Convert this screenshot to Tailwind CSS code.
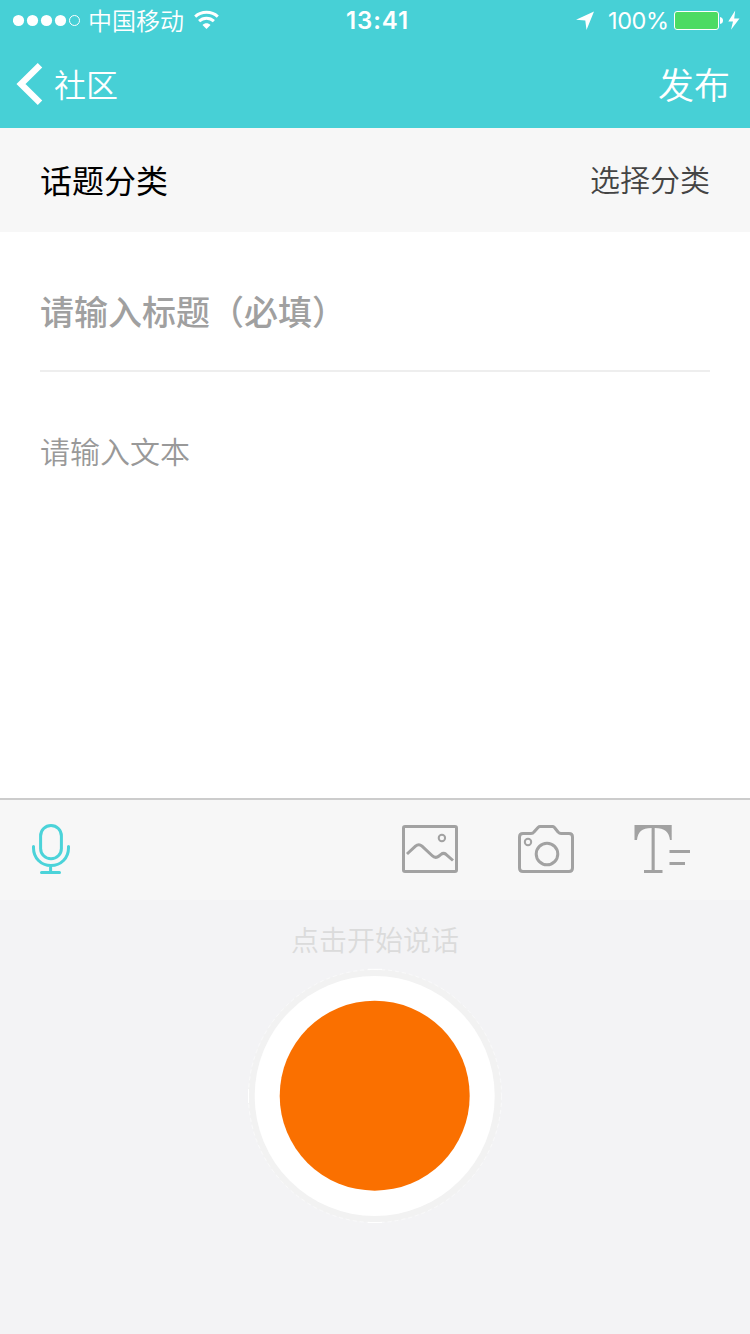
<!DOCTYPE html>
<html lang="zh-CN">
<head>
<meta charset="utf-8">
<title>发布话题</title>
<script src="https://cdn.jsdelivr.net/npm/@tailwindcss/browser@4"></script>
</head>
<body class="w-[750px] h-[1334px] overflow-hidden bg-white flex flex-col font-['Noto_Sans_CJK_SC',sans-serif]">
  <header class="h-32 shrink-0 bg-[#47d0d6] text-white">
    <div class="h-10 grid grid-cols-3 items-center">
      <div class="flex items-center h-10 pl-[13px]">
        <svg class="w-[68px] h-10" viewBox="0 0 68 40" fill="#fff">
          <circle cx="5.5" cy="20.5" r="5.6"/><circle cx="19.5" cy="20.5" r="5.6"/><circle cx="33.5" cy="20.5" r="5.6"/><circle cx="47.5" cy="20.5" r="5.6"/>
          <circle cx="61.5" cy="20.5" r="5" fill="none" stroke="#fff"/>
        </svg>
        <span class="ml-[7px] text-2xl leading-10 font-[350] whitespace-nowrap">中国移动</span>
        <svg class="ml-[10px] w-[25px] h-10 shrink-0" viewBox="0 0 25 40" fill="none" stroke="#fff" stroke-width="3">
          <path d="M1.2 16.6C7.5 10.9 17.5 10.9 23.8 16.6"/>
          <path d="M5.1 21.1C9.2 17.2 15.8 17.2 19.9 21.1"/>
          <path d="M8.5 25.1C10.7 22.7 14.3 22.7 16.5 25.1L12.5 29Z" fill="#fff" stroke="none"/>
        </svg>
      </div>
      <div class="text-center text-2xl leading-[38px] font-semibold tracking-[0.9px] font-[Inter,sans-serif] pl-[5px] pt-[2px]">13:41</div>
      <div class="flex items-center justify-end h-10 pr-[10px]">
        <svg class="w-[18px] h-10 shrink-0" viewBox="0 0 18 40" fill="#fff"><path d="M18 11.500L0 19.700L9.300 20.600L10.500 30Z"/></svg>
        <span class="ml-[14px] pt-[2px] w-[60px] text-[23.5px] leading-[38px] font-normal tracking-[-0.4px] whitespace-nowrap font-[Inter,sans-serif]">100%</span>
        <svg class="ml-[5px] w-[50px] h-10 shrink-0" viewBox="0 0 50 40">
          <rect x="1.500" y="11.500" width="44" height="18" rx="2.500" fill="#4cdb63" stroke="#fff"/>
          <path d="M47 17Q50 17.500 50 20.500Q50 23.500 47 24Z" fill="#fff"/>
        </svg>
        <svg class="ml-[5px] w-3 h-10 shrink-0" viewBox="0 0 12 40" fill="#fff"><path d="M7.200 10.500L0.300 21.500H5L3 29.700L11.500 18.400H6.200Z"/></svg>
      </div>
    </div>
    <div class="h-[88px] flex items-center justify-between pl-4 pr-5">
      <div class="flex items-center">
        <svg class="w-[27px] h-[44px]" viewBox="0 0 27 44" fill="none" stroke="#fff" stroke-width="6.400"><path d="M24 3.200L5 22L24 40.800"/></svg>
        <span class="ml-[11px] text-[32px] leading-[86px] pb-[2px] font-[350]">社区</span>
      </div>
      <span class="text-4xl leading-[86px] pb-[2px] font-[350]">发布</span>
    </div>
  </header>
  <section class="h-[104px] shrink-0 bg-[#f7f7f7] px-10 pb-[3px] flex items-center justify-between">
    <span class="text-[32px] text-black font-normal">话题分类</span>
    <span class="text-[30px] text-[#444] font-[350]">选择分类</span>
  </section>
  <main class="h-[566px] shrink-0 px-10">
    <div class="h-[140px] pt-[19px] border-b-2 border-[#eee] flex items-center text-[34px] font-medium text-[#a0a0a0] whitespace-nowrap">请输入标题（必填）</div>
    <div class="pt-[56px] text-[30px] leading-[44px] font-[350] text-[#999]">请输入文本</div>
  </main>
  <nav class="h-[102px] shrink-0 bg-[#f7f7f7] border-t-2 border-[#ccc] flex items-center justify-between pl-8 pr-[59px]">
    <svg class="w-[38px] h-[100px]" viewBox="32 800 38 100" fill="none" stroke="#4bd3d9" stroke-width="3" stroke-linecap="round">
      <rect x="40.600" y="825.500" width="20.800" height="33.300" rx="10.400"/>
      <path d="M33.500 846.500V848C33.500 858 41 865.600 51 865.600S68.500 858 68.500 848V846.500M50.600 866V872M41.500 872.500H59.500"/>
    </svg>
    <div class="flex items-center gap-[60px]">
      <svg class="w-14 h-[100px]" viewBox="402 800 56 100" fill="none" stroke="#a2a2a2" stroke-width="3">
        <rect x="403.500" y="826.500" width="53" height="45" rx="1.500"/>
        <circle cx="441.900" cy="838" r="3.200" stroke-width="2"/>
        <path d="M407 854L415.500 846.200Q418.800 843.200 422 846.200L432 855.500Q435.500 859 439 856L441 854.400Q443.500 852.400 446 854.300L453 860.500"/>
      </svg>
      <svg class="w-14 h-[100px]" viewBox="518 800 56 100" fill="none" stroke="#a2a2a2" stroke-width="3">
        <path d="M523 833.500H531Q533 833.500 534 832L538 827.500Q539 826.500 540 826.500H552.500Q553.500 826.500 554.500 827.500L558 832Q559.500 833.500 561 833.500H569Q572.500 833.500 572.500 837V868Q572.500 871.500 569 871.500H523Q519.500 871.500 519.500 868V837Q519.500 833.500 523 833.500Z"/>
        <circle cx="528" cy="842" r="3.200" stroke-width="2"/>
        <circle cx="547" cy="854" r="10.800"/>
      </svg>
      <svg class="w-[57px] h-[100px]" viewBox="634 800 57 100" fill="#a2a2a2">
        <path d="M634.500 825H671.700V840H670C669 832 665 828 654.700 828V870H662.500V873H644V870H651.600V828C641.500 828 638 832 637 840H634.500Z"/>
        <path d="M669.500 850H690V853H669.500ZM669.500 862H685V865H669.500Z"/>
      </svg>
    </div>
  </nav>
  <section class="flex-1 bg-[#f3f3f5] flex flex-col items-center">
    <p class="mt-[17px] text-[28px] leading-[44px] font-[350] text-[#dbdbdb]">点击开始说话</p>
    <svg class="mt-[7px] w-[256px] h-[256px]" viewBox="247 968 256 256">
      <circle cx="375" cy="1096" r="126.500" fill="#f2f2f2"/>
      <circle cx="375" cy="1096" r="126.500" fill="none" stroke="#fff" stroke-width="0.500" stroke-dasharray="4 3"/>
      <path d="M368 969.300H382M368 1222.500H382M248.500 1089V1103" stroke="#fff"/>
      <circle cx="374.700" cy="1096" r="120" fill="#fff"/>
      <circle cx="374.700" cy="1095.700" r="95" fill="#fa7000"/>
    </svg>
  </section>
</body>
</html>
